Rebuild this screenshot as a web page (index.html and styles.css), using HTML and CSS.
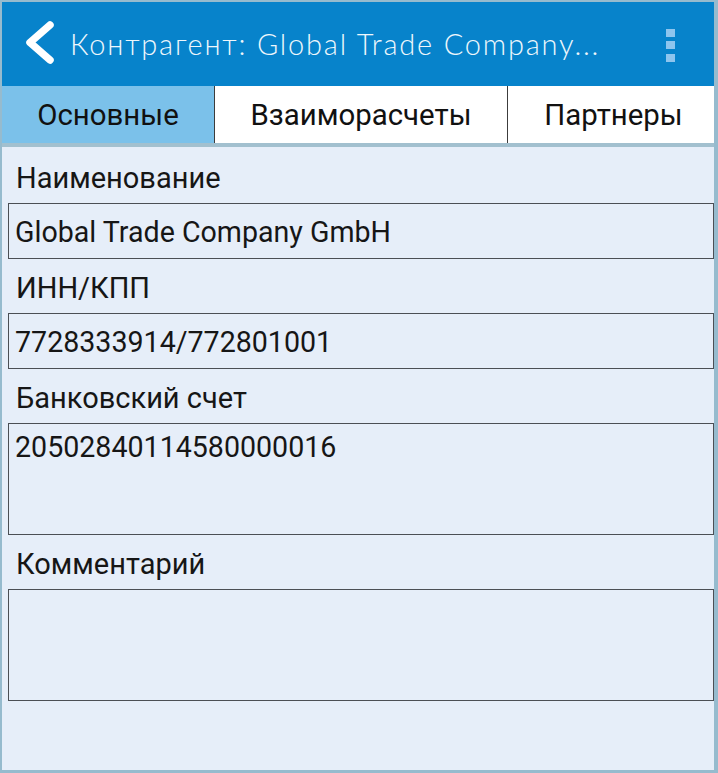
FILE: index.html
```html
<!DOCTYPE html>
<html>
<head>
  <meta charset="utf-8"/>
  <link rel="stylesheet" href="styles.css">
  <title>Контрагент</title>
</head>
<body>
  <div class="screen">
    <div class="action-bar">
      <svg class="back" width="40" height="48" viewBox="0 0 40 48">
        <polyline points="30,5 10,22.5 30,40" fill="none" stroke="#fff" stroke-width="7.5" stroke-linecap="round" stroke-linejoin="round"/>
      </svg>
      <div class="title">Контрагент: Global Trade Company...</div>
      <div class="overflow-menu">
        <span></span><span></span><span></span>
      </div>
    </div>

    <div class="tabs">
      <div class="tab tab-active">Основные</div>
      <div class="tab tab-wide">Взаиморасчеты</div>
      <div class="tab tab-last">Партнеры</div>
    </div>

    <div class="form">
      <div class="field">
        <div class="field-label">Наименование</div>
        <div class="field-box">Global Trade Company GmbH</div>
      </div>
      <div class="field">
        <div class="field-label">ИНН/КПП</div>
        <div class="field-box">7728333914/772801001</div>
      </div>
      <div class="field">
        <div class="field-label">Банковский счет</div>
        <div class="field-box field-multi">20502840114580000016</div>
      </div>
      <div class="field">
        <div class="field-label">Комментарий</div>
        <div class="field-box field-multi"></div>
      </div>
    </div>
  </div>
</body>
</html>
```

FILE: styles.css
```css
html, body {
  margin: 0;
  padding: 0;
}

body {
  font-family: Roboto, "Noto Sans", sans-serif;
  color: #161616;
}

.screen {
  width: 718px;
  height: 773px;
  box-sizing: border-box;
  border-style: solid;
  border-color: #96bbce;
  border-width: 2px 4px 3px 2px;
  background: #e6eef9;
  display: flex;
  flex-flow: column;
}

/* top bar */
.action-bar {
  height: 84px;
  flex: 0 0 auto;
  background: #0783cb;
  display: flex;
  align-items: center;
}

.back {
  display: block;
  margin-left: 18px;
  flex: 0 0 auto;
}

.title {
  margin-left: 10px;
  margin-top: -2px;
  font-family: Lato, "Open Sans", sans-serif;
  font-weight: 300;
  font-size: 29px;
  letter-spacing: 1.8px;
  color: #eef7fc;
  white-space: nowrap;
}

.overflow-menu {
  margin-left: auto;
  margin-right: 39px;
  display: flex;
  flex-flow: column;
  gap: 4.5px;
  margin-top: 2px;
}

.overflow-menu span {
  display: block;
  width: 9px;
  height: 8px;
  background: #8ec5ee;
}

/* tabs */
.tabs {
  display: flex;
  height: 57px;
  flex: 0 0 auto;
  border-bottom: 4px solid #a2c0cf;
}

.tab {
  flex: 0 0 auto;
  background: #fff;
  border-left: 1px solid #3c3c3c;
  display: flex;
  align-items: center;
  justify-content: center;
  font-size: 29.4px;
  color: #111;
}

.tab-active {
  width: 212px;
  background: #7bc1ea;
  border-left: none;
}

.tab-wide {
  width: 292px;
}

.tab-last {
  flex: 1 1 auto;
  padding-left: 5px;
}

/* form */
.form {
  padding: 16px 0 0 6px;
}

.field {
  margin-bottom: 14px;
}

.field-label {
  font-size: 29px;
  line-height: 30px;
  padding-left: 8px;
  margin-bottom: 10px;
}

.field-box {
  height: 56px;
  box-sizing: border-box;
  border: 1px solid #4b4f55;
  padding: 13px 6px 0;
  font-size: 28.6px;
  line-height: 30px;
  white-space: nowrap;
}

.field-multi {
  height: 112px;
  padding-top: 8px;
}
```
